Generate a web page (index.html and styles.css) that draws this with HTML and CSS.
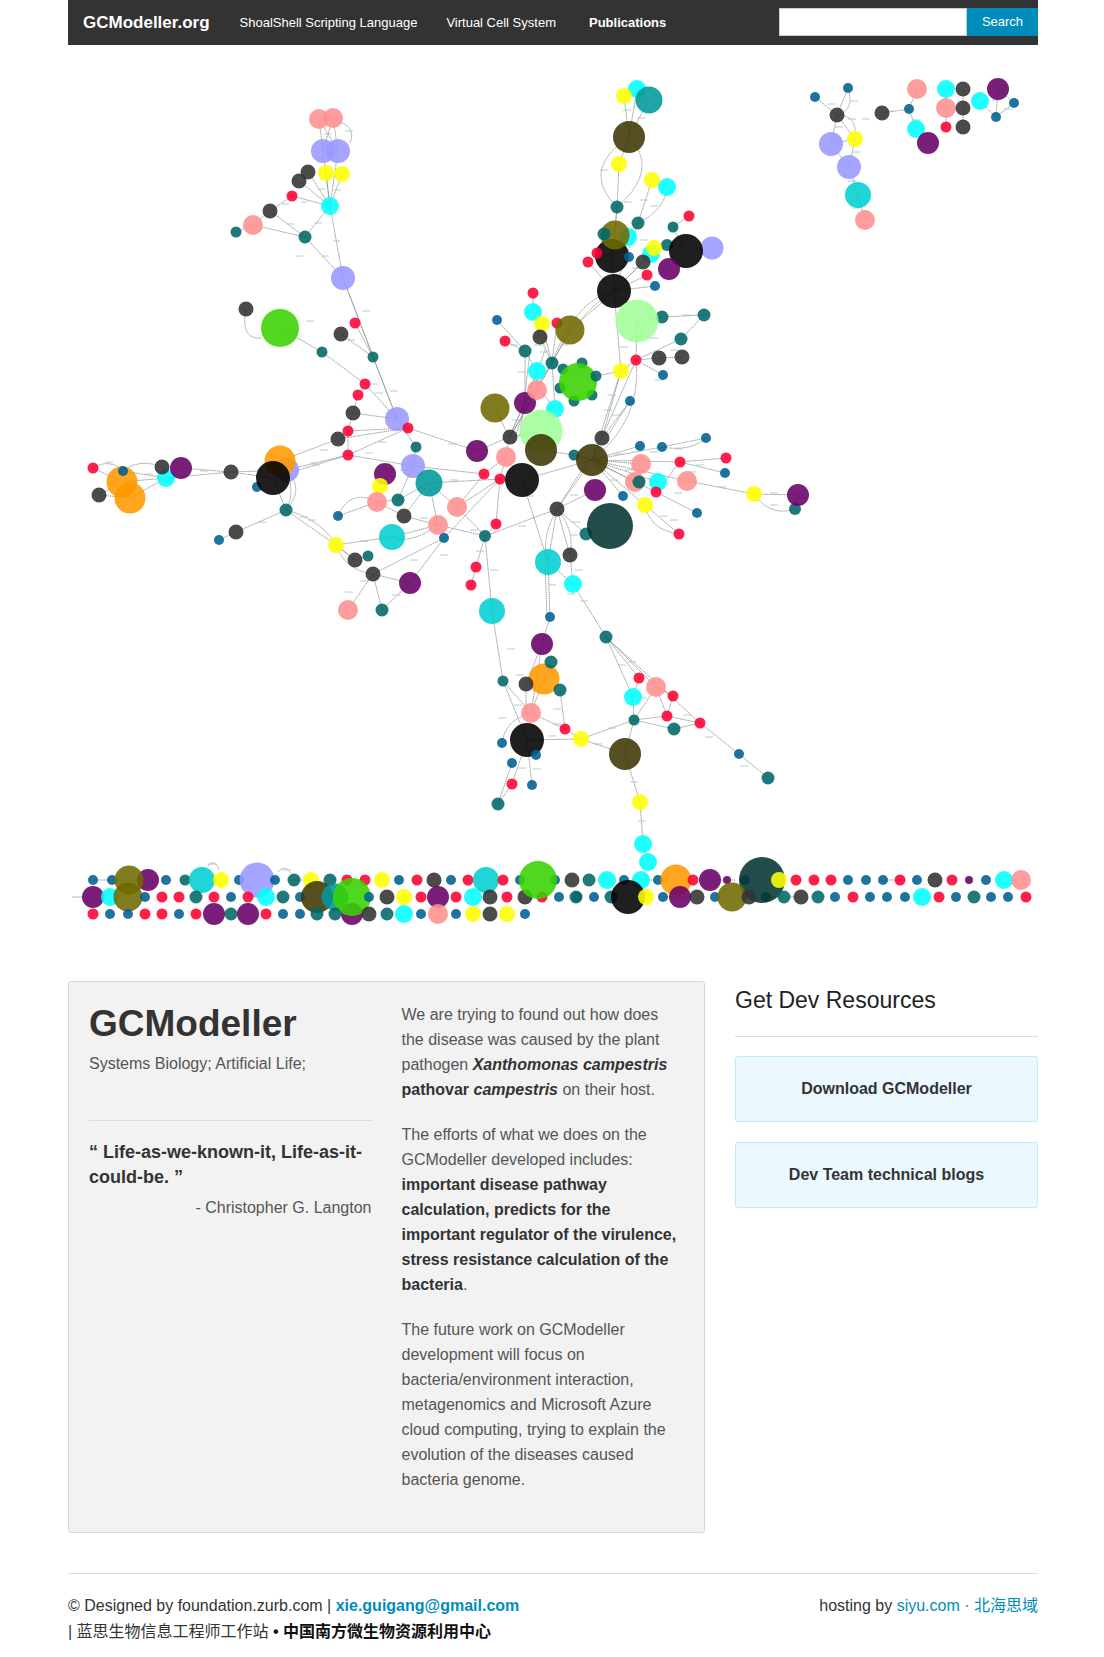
FILE: index.html
```
<!DOCTYPE html>
<html lang="en">
<head>
  <meta charset="UTF-8" />
  <title>GCModeller</title>
  <link rel="stylesheet" href="styles.css">
</head>
<body>
<div class="page">

  <!-- Top bar -->
  <nav class="topbar">
    <a class="logo" href="#">GCModeller.org</a>
    <a class="nav-link shoal" href="#">ShoalShell Scripting Language</a>
    <a class="nav-link cell" href="#">Virtual Cell System</a>
    <a class="nav-link pubs" href="#">Publications</a>
    <form class="search">
      <input type="text" />
      <button type="button">Search</button>
    </form>
  </nav>

  <!-- Network graph, coordinates are page pixels -->
  <svg class="graph" viewBox="68 45 970 900" width="970" height="900">
    <path class="edges" d="M319 119L323 151M333 118L338 151M319 119L338 151M333 118L323 151M340 122Q356 128 350 143M326 173L330 206M342 174L330 206M323 151L330 206M338 151L330 206M308 172L330 206M299 181L330 206M292 196L330 206M292 196L270 211M270 211L253 225M253 225L236 232M253 225L305 237M270 211L305 237M305 237L330 206M343 278L330 206M343 278L305 237M343 278L373 357M343 278L397 419
    M280 328L322 352M322 352L365 384M365 384L397 419M355 323L373 357M341 334L373 357M373 357L397 419M246 309Q240 340 262 338M358 395L353 413M353 413L397 419M353 413L348 431M348 431L408 428M348 431L348 455M338 439L408 428M348 455L408 428M408 428L477 451M397 419L416 447M416 447L413 466
    M93 468Q110 458 123 471M93 468L122 482M123 471L166 478M122 482L166 478M130 498L166 478M99 495L122 482M99 495L130 498M123 471Q140 458 162 467M162 467L166 478M181 468L231 472M166 478L231 472M231 472L273 478M231 472L287 470M280 461L338 439M287 470L348 455M273 478L348 455M287 470Q305 490 286 510M273 478L286 510M287 470Q295 495 286 510M286 510L236 532M236 532L219 540M286 510Q322 520 336 545M286 510L336 545M336 545L392 537M336 545L355 560M336 545Q345 570 373 574M348 610L373 574M373 574L382 610M373 574L410 583M410 583L382 610M410 583L444 538M373 574L444 538M355 560L368 556M355 560L336 545
    M348 455L413 466M413 466L484 474M429 483L500 479M429 483L457 507M429 483L438 525M398 500L429 483M398 500L413 466M404 516L429 483M404 516L438 525M377 502L398 500M377 502L404 516M338 516Q350 488 377 502M338 516L377 502M438 525Q410 545 392 537M392 537L438 525M438 525L485 536M457 507L485 536M457 507L500 479M457 507L484 474M444 538L500 479M485 536L496 524M496 524L500 479M485 536L557 509M485 536L476 567M476 567L471 585M485 536L492 611M522 480L548 562M522 480L592 460
    M477 451L509 437M509 437L525 403M509 437L506 457M506 457L500 479M484 474L506 457M495 408L509 437M497 320L525 351M505 341L525 351M533 292L533 312M533 312L540 337M542 324L552 363M540 337L552 363M557 323L552 363M570 330L552 363M570 330L614 292M552 363Q580 310 614 292M525 351L537 371M525 351L525 403M537 371L537 390M552 363L537 390M552 363L525 403M552 363L510 437M537 390L510 437M537 371L510 437M541 431L510 437M555 409L540 390M552 363L555 409M530 351L520 437M545 350L515 437
    M596 376L621 371M621 371L636 360M637 321L636 360M614 291L621 371M621 371L602 438M621 371L592 460M636 360L592 460M630 401L602 438M630 401L592 460M636 360Q642 420 592 460M636 360L659 358M636 360L681 339M659 358L682 357M636 360L663 375M662 317L704 315M704 315L681 339M637 321L662 317
    M592 460L640 446M592 460L662 447M662 447L706 438M662 447Q690 452 706 438M592 460L641 464M592 460L680 462M592 460L635 482M592 460L658 482M592 460L656 492M592 460L645 505M592 460L623 496M592 460L687 481M680 462L726 458M680 462L725 473M656 492L680 462M656 492L697 513M645 505L679 534M645 505Q650 530 679 534M687 481L754 494M754 494L798 495M754 494Q770 517 795 509M798 495L795 509M592 460L557 509M602 438L557 509M595 490L557 509M557 509Q540 540 548 562M548 562L557 509M570 555L557 509M570 555Q575 530 557 509M586 534L557 509M570 555L573 584M548 562L573 584M573 584L606 637M548 562L550 617M545 562L547 617M550 617L542 644M541 450L574 455M574 455L592 460
    M492 611L503 681M542 644L531 713M551 662L544 679M542 644L526 684M544 679L531 713M526 684L526 713M560 690L565 729M503 681L531 713M503 681L527 740M531 713Q505 720 502 743M565 729L531 713M581 739L527 740M581 739L634 720M625 754L581 739M625 754L634 720M565 729L581 739M498 804L512 763M498 804L512 784M512 784L527 740M532 785L527 740M606 637L633 697M606 637L639 678M606 637L656 687M606 637L700 723M633 697L634 720M639 678L633 697M656 687L673 696M656 687L634 720M656 687L667 716M673 696L667 716M634 720L667 716M634 720L674 729M667 716L700 723M674 729L700 723M700 723L739 754M739 754L768 778M625 754L640 802M640 802L643 844M643 844L648 862
    M624 96L629 137M637 89L629 137M649 100L629 137M629 137L619 164M619 164L617 207M629 137Q580 170 617 207M629 137Q660 170 617 207M652 180L638 223M667 187Q665 210 638 223M617 207L615 235M604 234L615 235M689 216L673 227M673 227L686 251M612 256L614 291M647 275L614 291M655 286L614 291M643 262L614 291M588 262L614 291M597 253L612 256M651 254L614 291M638 223L614 291M638 223L612 256M617 207L612 256M614 291Q575 300 552 363M637 321L614 291
    M815 97L837 115M848 88L837 115M848 88Q855 110 837 115M837 115L831 144M837 115L855 139M837 115Q858 115 855 139M831 144L855 139M855 139L849 167M831 144L849 167M849 167L858 195M858 195L865 220M882 113L909 109M909 109L917 89M909 109L916 129M946 89L946 108M946 108L946 127M963 89L963 108M963 108L963 127M980 101L996 117M998 89L1014 103M998 89L996 117M1014 103L996 117
    M72 897H92M93 880H130M290 880H310M640 880H670M660 897H690M715 880H735M770 897H800M880 880H905M1000 880H1020M208 866Q215 858 219 870M278 872Q285 864 291 873" />
    <path class="edge-labels" d="M324 134h8M345 131h8M318 189h7M334 190h7M301 202h7M282 204h7M287 224h7M314 223h8M322 256h7M296 256h7M333 241h7M306 321h8M347 340h8M362 311h8M370 384h8M375 393h8M390 391h8M105 462h8M120 472h8M145 474h8M200 471h8M320 450h8M312 465h8M310 463h8M365 453h8M378 442h8M448 444h8M300 517h8M308 520h8M258 522h8M360 541h8M410 560h8M360 581h8M392 595h8M345 592h8M440 555h8M452 510h8M400 470h8M450 480h8M470 530h8M420 518h8M518 526h8M525 496h8M476 551h8M490 570h8M510 345h8M534 345h8M560 345h8M550 361h8M540 352h8M518 372h8M512 420h8M520 410h8M608 395h8M612 415h8M604 410h8M620 347h8M650 338h8M670 350h8M655 380h8M682 315h8M675 449h8M650 452h8M615 454h8M625 470h8M610 480h8M688 472h8M696 465h8M674 493h8M670 520h8M660 516h8M718 487h8M770 493h8M770 505h8M570 495h8M550 560h8M548 585h8M572 522h8M570 535h8M575 570h8M567 594h8M580 601h8M507 649h8M516 675h8M514 705h8M498 718h8M528 717h8M553 709h8M553 724h8M548 736h8M608 728h8M594 744h8M518 768h8M533 769h8M628 662h8M618 665h8M639 698h8M683 715h8M705 737h8M740 766h8M630 782h8M638 821h8M623 110h8M638 118h8M613 169h8M600 170h8M640 200h8M650 206h8M624 202h8M640 240h8M610 272h8M632 268h8M827 104h8M850 101h8M835 127h8M848 119h8M862 119h8M852 152h8M840 160h8M848 181h8M852 208h8M886 111h8M912 120h8M992 100h8M1004 109h8M130 880h8M208 864h9M282 870h9" />

    <!-- top left cluster -->
    <circle class="red" cx="533" cy="293" r="5.5"/>
    <circle class="pink" cx="319" cy="119" r="10"/>
    <circle class="pink" cx="333" cy="118" r="10"/>
    <circle class="lav" cx="323" cy="151" r="12"/>
    <circle class="lav" cx="338" cy="151" r="12"/>
    <circle class="dark" cx="308" cy="172" r="7.5"/>
    <circle class="dark" cx="299" cy="181" r="7.5"/>
    <circle class="yellow" cx="326" cy="173" r="8"/>
    <circle class="yellow" cx="342" cy="174" r="8"/>
    <circle class="red" cx="292" cy="196" r="5.5"/>
    <circle class="cyan" cx="330" cy="206" r="9"/>
    <circle class="dark" cx="270" cy="211" r="7.5"/>
    <circle class="pink" cx="253" cy="225" r="10"/>
    <circle class="teal" cx="236" cy="232" r="5.5"/>
    <circle class="teal" cx="305" cy="237" r="6.5"/>
    <circle class="lav" cx="343" cy="278" r="12"/>

    <!-- top centre cluster -->
    <circle class="cyan" cx="637" cy="89" r="9"/>
    <circle class="yellow" cx="624" cy="96" r="8"/>
    <circle class="aqua" cx="649" cy="100" r="13.5"/>
    <circle class="mud" cx="629" cy="137" r="16"/>
    <circle class="yellow" cx="619" cy="164" r="8"/>
    <circle class="yellow" cx="652" cy="180" r="8"/>
    <circle class="cyan" cx="667" cy="187" r="9"/>
    <circle class="teal" cx="617" cy="207" r="6.5"/>
    <circle class="teal" cx="638" cy="223" r="6.5"/>
    <circle class="red" cx="689" cy="216" r="5.5"/>
    <circle class="teal" cx="673" cy="227" r="5.5"/>
    <circle class="cyan" cx="628" cy="237" r="9"/>
    <circle class="black" cx="612" cy="256" r="17"/>
    <circle class="olive" cx="615" cy="235" r="14.5"/>
    <circle class="teal" cx="604" cy="234" r="6.5"/>
    <circle class="teal" cx="667" cy="245" r="6"/>
    <circle class="lav" cx="712" cy="248" r="11.5"/>
    <circle class="black" cx="686" cy="251" r="17"/>
    <circle class="cyan" cx="651" cy="254" r="9"/>
    <circle class="yellow" cx="654" cy="248" r="8"/>
    <circle class="red" cx="597" cy="253" r="5.5"/>
    <circle class="red" cx="588" cy="262" r="5.5"/>
    <circle class="blue" cx="629" cy="257" r="5"/>
    <circle class="dark" cx="643" cy="262" r="7.5"/>
    <circle class="purple" cx="669" cy="269" r="11"/>
    <circle class="red" cx="647" cy="275" r="5.5"/>
    <circle class="blue" cx="655" cy="286" r="5"/>
    <circle class="black" cx="614" cy="291" r="17"/>

    <!-- top right clusters -->
    <circle class="blue" cx="815" cy="97" r="5"/>
    <circle class="blue" cx="848" cy="88" r="5"/>
    <circle class="dark" cx="837" cy="115" r="7.5"/>
    <circle class="lav" cx="831" cy="144" r="12"/>
    <circle class="yellow" cx="855" cy="139" r="8"/>
    <circle class="lav" cx="849" cy="167" r="12"/>
    <circle class="turq" cx="858" cy="195" r="13"/>
    <circle class="pink" cx="865" cy="220" r="10"/>
    <circle class="pink" cx="917" cy="89" r="10"/>
    <circle class="dark" cx="882" cy="113" r="7.5"/>
    <circle class="blue" cx="909" cy="109" r="5"/>
    <circle class="cyan" cx="916" cy="129" r="9"/>
    <circle class="purple" cx="928" cy="143" r="11"/>
    <circle class="cyan" cx="946" cy="89" r="9"/>
    <circle class="pink" cx="946" cy="108" r="10"/>
    <circle class="red" cx="946" cy="127" r="5.5"/>
    <circle class="dark" cx="963" cy="89" r="7.5"/>
    <circle class="dark" cx="963" cy="108" r="7.5"/>
    <circle class="dark" cx="963" cy="127" r="7.5"/>
    <circle class="cyan" cx="980" cy="101" r="9"/>
    <circle class="purple" cx="998" cy="89" r="11"/>
    <circle class="blue" cx="1014" cy="103" r="5"/>
    <circle class="blue" cx="996" cy="117" r="5"/>

    <!-- left and middle -->
    <circle class="dark" cx="246" cy="309" r="7.5"/>
    <circle class="green" cx="280" cy="328" r="19"/>
    <circle class="red" cx="355" cy="323" r="5.5"/>
    <circle class="dark" cx="341" cy="334" r="7.5"/>
    <circle class="teal" cx="322" cy="352" r="5.5"/>
    <circle class="teal" cx="373" cy="357" r="5.5"/>
    <circle class="red" cx="365" cy="384" r="5.5"/>
    <circle class="red" cx="358" cy="395" r="5.5"/>
    <circle class="dark" cx="353" cy="413" r="7.5"/>
    <circle class="lav" cx="397" cy="419" r="12"/>
    <circle class="red" cx="408" cy="428" r="5.5"/>
    <circle class="red" cx="348" cy="431" r="5.5"/>
    <circle class="dark" cx="338" cy="439" r="7.5"/>
    <circle class="red" cx="348" cy="455" r="5.5"/>
    <circle class="teal" cx="416" cy="447" r="5.5"/>
    <circle class="purple" cx="385" cy="474" r="11"/>
    <circle class="lav" cx="413" cy="466" r="12"/>
    <circle class="yellow" cx="380" cy="486" r="8"/>
    <circle class="aqua" cx="429" cy="483" r="13.5"/>
    <circle class="pink" cx="377" cy="502" r="10"/>
    <circle class="teal" cx="398" cy="500" r="6.5"/>
    <circle class="dark" cx="404" cy="516" r="7.5"/>
    <circle class="pink" cx="457" cy="507" r="10"/>
    <circle class="pink" cx="438" cy="525" r="10"/>
    <circle class="blue" cx="444" cy="538" r="5"/>
    <circle class="blue" cx="338" cy="516" r="5"/>
    <circle class="turq" cx="392" cy="537" r="13"/>
    <circle class="yellow" cx="336" cy="545" r="8"/>
    <circle class="dark" cx="355" cy="560" r="7.5"/>
    <circle class="teal" cx="368" cy="556" r="5.5"/>
    <circle class="dark" cx="373" cy="574" r="7.5"/>
    <circle class="purple" cx="410" cy="583" r="11"/>
    <circle class="pink" cx="348" cy="610" r="10"/>
    <circle class="teal" cx="382" cy="610" r="6.5"/>
    <circle class="red" cx="93" cy="468" r="5.5"/>
    <circle class="orange" cx="122" cy="482" r="15.5"/>
    <circle class="orange" cx="130" cy="498" r="15.5"/>
    <circle class="blue" cx="123" cy="471" r="5"/>
    <circle class="dark" cx="99" cy="495" r="7.5"/>
    <circle class="cyan" cx="166" cy="478" r="9"/>
    <circle class="dark" cx="162" cy="467" r="7.5"/>
    <circle class="purple" cx="181" cy="468" r="11"/>
    <circle class="dark" cx="231" cy="472" r="7.5"/>
    <circle class="lav" cx="287" cy="470" r="12"/>
    <circle class="orange" cx="280" cy="461" r="15.5"/>
    <circle class="blue" cx="257" cy="487" r="5"/>
    <circle class="black" cx="273" cy="478" r="17"/>
    <circle class="teal" cx="286" cy="510" r="6.5"/>
    <circle class="dark" cx="236" cy="532" r="7.5"/>
    <circle class="blue" cx="219" cy="540" r="5"/>

    <!-- centre -->
    <circle class="teal" cx="563" cy="369" r="5.5"/>
    <circle class="teal" cx="582" cy="363" r="5.5"/>
    <circle class="teal" cx="560" cy="388" r="5.5"/>
    <circle class="teal" cx="592" cy="395" r="5.5"/>
    <circle class="teal" cx="574" cy="401" r="5.5"/>
    <circle class="green" cx="578" cy="382" r="19"/>
    <circle class="teal" cx="596" cy="376" r="5.5"/>
    <circle class="cyan" cx="533" cy="312" r="9"/>
    <circle class="blue" cx="497" cy="320" r="5"/>
    <circle class="red" cx="557" cy="323" r="5.5"/>
    <circle class="yellow" cx="542" cy="324" r="8"/>
    <circle class="olive" cx="570" cy="330" r="14.5"/>
    <circle class="dark" cx="540" cy="337" r="7.5"/>
    <circle class="red" cx="505" cy="341" r="5.5"/>
    <circle class="teal" cx="525" cy="351" r="6.5"/>
    <circle class="teal" cx="552" cy="363" r="6.5"/>
    <circle class="cyan" cx="537" cy="371" r="9"/>
    <circle class="purple" cx="525" cy="403" r="11"/>
    <circle class="pink" cx="537" cy="390" r="10"/>
    <circle class="olive" cx="495" cy="408" r="14.5"/>
    <circle class="cyan" cx="555" cy="409" r="9"/>
    <circle class="mint" cx="541" cy="431" r="21.5"/>
    <circle class="mud" cx="541" cy="450" r="16"/>
    <circle class="dark" cx="510" cy="437" r="7.5"/>
    <circle class="purple" cx="477" cy="451" r="11"/>
    <circle class="pink" cx="506" cy="457" r="10"/>
    <circle class="red" cx="484" cy="474" r="5.5"/>
    <circle class="red" cx="500" cy="479" r="5.5"/>
    <circle class="black" cx="522" cy="480" r="17"/>
    <circle class="red" cx="496" cy="524" r="5.5"/>
    <circle class="teal" cx="485" cy="536" r="6"/>
    <circle class="red" cx="476" cy="567" r="5.5"/>
    <circle class="red" cx="471" cy="585" r="5.5"/>
    <circle class="turq" cx="492" cy="611" r="13"/>
    <circle class="yellow" cx="621" cy="371" r="8"/>
    <circle class="blue" cx="630" cy="401" r="5"/>
    <circle class="teal" cx="662" cy="317" r="6.5"/>
    <circle class="mint" cx="637" cy="321" r="21.5"/>
    <circle class="teal" cx="704" cy="315" r="6.5"/>
    <circle class="teal" cx="681" cy="339" r="6.5"/>
    <circle class="red" cx="636" cy="360" r="5.5"/>
    <circle class="dark" cx="659" cy="358" r="7.5"/>
    <circle class="dark" cx="682" cy="357" r="7.5"/>
    <circle class="blue" cx="663" cy="375" r="5"/>
    <circle class="dark" cx="602" cy="438" r="7.5"/>
    <circle class="teal" cx="574" cy="455" r="5.5"/>
    <circle class="mud" cx="592" cy="460" r="16"/>
    <circle class="pink" cx="641" cy="464" r="10"/>
    <circle class="pink" cx="635" cy="482" r="10"/>
    <circle class="teal" cx="639" cy="482" r="6.5"/>
    <circle class="cyan" cx="658" cy="482" r="9"/>
    <circle class="red" cx="656" cy="492" r="5.5"/>
    <circle class="red" cx="680" cy="462" r="5.5"/>
    <circle class="pink" cx="687" cy="481" r="10"/>
    <circle class="blue" cx="640" cy="446" r="5"/>
    <circle class="blue" cx="662" cy="447" r="5"/>
    <circle class="blue" cx="706" cy="438" r="5"/>
    <circle class="red" cx="726" cy="458" r="5.5"/>
    <circle class="blue" cx="725" cy="473" r="5"/>
    <circle class="yellow" cx="754" cy="494" r="8"/>
    <circle class="teal" cx="795" cy="509" r="6"/>
    <circle class="purple" cx="798" cy="495" r="11"/>
    <circle class="purple" cx="595" cy="490" r="11"/>
    <circle class="yellow" cx="645" cy="505" r="8"/>
    <circle class="blue" cx="623" cy="496" r="5"/>
    <circle class="blue" cx="697" cy="513" r="5"/>
    <circle class="red" cx="679" cy="534" r="5.5"/>
    <circle class="dark" cx="557" cy="509" r="7.5"/>
    <circle class="teal" cx="586" cy="534" r="6.5"/>
    <circle class="slate" cx="610" cy="526" r="23"/>
    <circle class="dark" cx="570" cy="555" r="7.5"/>
    <circle class="turq" cx="548" cy="562" r="13"/>
    <circle class="cyan" cx="573" cy="584" r="9"/>

    <!-- lower clusters -->
    <circle class="blue" cx="550" cy="617" r="5"/>
    <circle class="purple" cx="542" cy="644" r="11"/>
    <circle class="orange" cx="544" cy="679" r="15.5"/>
    <circle class="teal" cx="551" cy="662" r="6.5"/>
    <circle class="dark" cx="526" cy="684" r="7.5"/>
    <circle class="teal" cx="560" cy="690" r="6.5"/>
    <circle class="teal" cx="503" cy="681" r="5.5"/>
    <circle class="pink" cx="531" cy="713" r="10"/>
    <circle class="black" cx="527" cy="740" r="17"/>
    <circle class="red" cx="565" cy="729" r="5.5"/>
    <circle class="yellow" cx="581" cy="739" r="8"/>
    <circle class="blue" cx="502" cy="743" r="5"/>
    <circle class="blue" cx="536" cy="755" r="5"/>
    <circle class="blue" cx="512" cy="763" r="5"/>
    <circle class="red" cx="512" cy="784" r="5.5"/>
    <circle class="blue" cx="532" cy="785" r="5"/>
    <circle class="teal" cx="498" cy="804" r="6.5"/>
    <circle class="teal" cx="606" cy="637" r="6.5"/>
    <circle class="red" cx="639" cy="678" r="5.5"/>
    <circle class="pink" cx="656" cy="687" r="10"/>
    <circle class="cyan" cx="633" cy="697" r="9"/>
    <circle class="red" cx="673" cy="696" r="5.5"/>
    <circle class="teal" cx="634" cy="720" r="5.5"/>
    <circle class="red" cx="667" cy="716" r="5.5"/>
    <circle class="teal" cx="674" cy="729" r="6.5"/>
    <circle class="red" cx="700" cy="723" r="5.5"/>
    <circle class="mud" cx="625" cy="754" r="16"/>
    <circle class="blue" cx="739" cy="754" r="5"/>
    <circle class="teal" cx="768" cy="778" r="6.5"/>
    <circle class="yellow" cx="640" cy="802" r="8"/>
    <circle class="cyan" cx="643" cy="844" r="9"/>
    <circle class="cyan" cx="648" cy="862" r="9"/>

    <!-- bottom rows, row 1 -->
    <circle class="blue" cx="93" cy="880" r="5"/>
    <circle class="blue" cx="112" cy="880" r="5"/>
    <circle class="purple" cx="148" cy="880" r="11"/>
    <circle class="olive" cx="129" cy="880" r="14.5"/>
    <circle class="blue" cx="166" cy="880" r="5"/>
    <circle class="teal" cx="185" cy="880" r="5.5"/>
    <circle class="turq" cx="202" cy="880" r="13"/>
    <circle class="yellow" cx="221" cy="880" r="8"/>
    <circle class="blue" cx="239" cy="880" r="5"/>
    <circle class="lav" cx="257" cy="880" r="17.5"/>
    <circle class="blue" cx="275" cy="880" r="5"/>
    <circle class="teal" cx="294" cy="880" r="6.5"/>
    <circle class="yellow" cx="311" cy="880" r="8"/>
    <circle class="teal" cx="330" cy="880" r="6.5"/>
    <circle class="red" cx="347" cy="880" r="5.5"/>
    <circle class="red" cx="365" cy="880" r="5.5"/>
    <circle class="yellow" cx="382" cy="880" r="8"/>
    <circle class="blue" cx="399" cy="880" r="5"/>
    <circle class="red" cx="417" cy="880" r="5.5"/>
    <circle class="dark" cx="434" cy="880" r="7.5"/>
    <circle class="blue" cx="451" cy="880" r="5"/>
    <circle class="red" cx="468" cy="880" r="5.5"/>
    <circle class="turq" cx="486" cy="880" r="13"/>
    <circle class="red" cx="503" cy="880" r="5.5"/>
    <circle class="blue" cx="520" cy="880" r="5"/>
    <circle class="blue" cx="555" cy="880" r="5"/>
    <circle class="dark" cx="572" cy="880" r="7.5"/>
    <circle class="teal" cx="589" cy="880" r="6.5"/>
    <circle class="cyan" cx="607" cy="880" r="9"/>
    <circle class="blue" cx="624" cy="880" r="5"/>
    <circle class="cyan" cx="641" cy="880" r="9"/>
    <circle class="blue" cx="658" cy="880" r="5"/>
    <circle class="orange" cx="676" cy="880" r="15.5"/>
    <circle class="red" cx="693" cy="880" r="5.5"/>
    <circle class="purple" cx="710" cy="880" r="11"/>
    <circle class="purple" cx="727" cy="880" r="4"/>
    <circle class="blue" cx="745" cy="880" r="5"/>
    <circle class="blue" cx="766" cy="897" r="5"/>
    <circle class="slate" cx="762" cy="880" r="23"/>
    <circle class="yellow" cx="779" cy="880" r="8"/>
    <circle class="red" cx="796" cy="880" r="5.5"/>
    <circle class="red" cx="814" cy="880" r="5.5"/>
    <circle class="red" cx="831" cy="880" r="5.5"/>
    <circle class="blue" cx="848" cy="880" r="5"/>
    <circle class="blue" cx="866" cy="880" r="5"/>
    <circle class="blue" cx="883" cy="880" r="5"/>
    <circle class="red" cx="900" cy="880" r="5.5"/>
    <circle class="blue" cx="917" cy="880" r="5"/>
    <circle class="dark" cx="935" cy="880" r="7.5"/>
    <circle class="red" cx="952" cy="880" r="5.5"/>
    <circle class="purple" cx="969" cy="880" r="4"/>
    <circle class="blue" cx="986" cy="880" r="5"/>
    <circle class="cyan" cx="1004" cy="880" r="9"/>
    <circle class="pink" cx="1021" cy="880" r="10"/>

    <!-- row 2 -->
    <circle class="purple" cx="93" cy="897" r="11"/>
    <circle class="cyan" cx="110" cy="897" r="9"/>
    <circle class="olive" cx="128" cy="897" r="14.5"/>
    <circle class="blue" cx="145" cy="897" r="5"/>
    <circle class="red" cx="162" cy="897" r="5.5"/>
    <circle class="red" cx="179" cy="897" r="5.5"/>
    <circle class="teal" cx="196" cy="897" r="6.5"/>
    <circle class="red" cx="214" cy="897" r="5.5"/>
    <circle class="blue" cx="231" cy="897" r="5"/>
    <circle class="red" cx="248" cy="897" r="5.5"/>
    <circle class="cyan" cx="266" cy="897" r="9"/>
    <circle class="teal" cx="283" cy="897" r="6.5"/>
    <circle class="blue" cx="300" cy="897" r="5"/>
    <circle class="mud" cx="317" cy="897" r="16"/>
    <circle class="purple" cx="352" cy="914" r="11"/>
    <circle class="aqua" cx="335" cy="897" r="13.5"/>
    <circle class="green" cx="352" cy="897" r="19"/>
    <circle class="blue" cx="369" cy="897" r="5"/>
    <circle class="dark" cx="387" cy="897" r="7.5"/>
    <circle class="yellow" cx="404" cy="897" r="8"/>
    <circle class="red" cx="421" cy="897" r="5.5"/>
    <circle class="purple" cx="438" cy="897" r="11"/>
    <circle class="red" cx="456" cy="897" r="5.5"/>
    <circle class="cyan" cx="473" cy="897" r="9"/>
    <circle class="dark" cx="490" cy="897" r="7.5"/>
    <circle class="red" cx="507" cy="897" r="5.5"/>
    <circle class="dark" cx="525" cy="897" r="7.5"/>
    <circle class="red" cx="542" cy="897" r="5.5"/>
    <circle class="blue" cx="559" cy="897" r="5"/>
    <circle class="green" cx="538" cy="880" r="19"/>
    <circle class="blue" cx="577" cy="897" r="5"/>
    <circle class="teal" cx="576" cy="897" r="6.5"/>
    <circle class="blue" cx="594" cy="897" r="5"/>
    <circle class="teal" cx="611" cy="897" r="6.5"/>
    <circle class="black" cx="628" cy="897" r="17"/>
    <circle class="yellow" cx="646" cy="897" r="8"/>
    <circle class="blue" cx="663" cy="897" r="5"/>
    <circle class="purple" cx="680" cy="897" r="11"/>
    <circle class="dark" cx="697" cy="897" r="7.5"/>
    <circle class="blue" cx="715" cy="897" r="5"/>
    <circle class="olive" cx="732" cy="897" r="14.5"/>
    <circle class="dark" cx="749" cy="897" r="7.5"/>
    <circle class="teal" cx="784" cy="897" r="6.5"/>
    <circle class="dark" cx="801" cy="897" r="7.5"/>
    <circle class="teal" cx="818" cy="897" r="6.5"/>
    <circle class="blue" cx="835" cy="897" r="5"/>
    <circle class="red" cx="853" cy="897" r="5.5"/>
    <circle class="blue" cx="870" cy="897" r="5"/>
    <circle class="blue" cx="887" cy="897" r="5"/>
    <circle class="blue" cx="905" cy="897" r="5"/>
    <circle class="cyan" cx="922" cy="897" r="9"/>
    <circle class="red" cx="939" cy="897" r="5.5"/>
    <circle class="blue" cx="956" cy="897" r="5"/>
    <circle class="teal" cx="974" cy="897" r="6.5"/>
    <circle class="blue" cx="991" cy="897" r="5"/>
    <circle class="blue" cx="1008" cy="897" r="5"/>
    <circle class="red" cx="1026" cy="897" r="5.5"/>

    <!-- row 3 -->
    <circle class="red" cx="93" cy="914" r="5.5"/>
    <circle class="blue" cx="110" cy="914" r="5"/>
    <circle class="blue" cx="128" cy="914" r="5"/>
    <circle class="red" cx="145" cy="914" r="5.5"/>
    <circle class="red" cx="162" cy="914" r="5.5"/>
    <circle class="blue" cx="179" cy="914" r="5"/>
    <circle class="red" cx="196" cy="914" r="5.5"/>
    <circle class="purple" cx="214" cy="914" r="11"/>
    <circle class="teal" cx="231" cy="914" r="6.5"/>
    <circle class="purple" cx="248" cy="914" r="11"/>
    <circle class="red" cx="266" cy="914" r="5.5"/>
    <circle class="blue" cx="283" cy="914" r="5"/>
    <circle class="blue" cx="300" cy="914" r="5"/>
    <circle class="teal" cx="317" cy="914" r="6.5"/>
    <circle class="teal" cx="335" cy="914" r="6.5"/>
    <circle class="dark" cx="369" cy="914" r="7.5"/>
    <circle class="teal" cx="387" cy="914" r="6.5"/>
    <circle class="cyan" cx="404" cy="914" r="9"/>
    <circle class="blue" cx="421" cy="914" r="5"/>
    <circle class="pink" cx="438" cy="914" r="10"/>
    <circle class="blue" cx="456" cy="914" r="5"/>
    <circle class="yellow" cx="473" cy="914" r="8"/>
    <circle class="dark" cx="490" cy="914" r="7.5"/>
    <circle class="yellow" cx="507" cy="914" r="8"/>
    <circle class="blue" cx="525" cy="914" r="5"/>
  </svg>

  <div class="content">
    <section class="panel">
      <div class="panel-col">
        <h1>GCModeller</h1>
        <p class="tagline">Systems Biology; Artificial Life;</p>
        <hr class="panel-rule" />
        <p class="quote">“ Life-as-we-known-it, Life-as-it-could-be. ”</p>
        <p class="cite">- Christopher G. Langton</p>
      </div>
      <div class="panel-col">
        <p>We are trying to found out how does the disease was caused by the plant pathogen <strong><em>Xanthomonas campestris</em> pathovar <em>campestris</em></strong> on their host.</p>
        <p>The efforts of what we does on the GCModeller developed includes: <strong>important disease pathway calculation, predicts for the important regulator of the virulence, stress resistance calculation of the bacteria</strong>.</p>
        <p>The future work on GCModeller development will focus on bacteria/environment interaction, metagenomics and Microsoft Azure cloud computing, trying to explain the evolution of the diseases caused bacteria genome.</p>
      </div>
    </section>

    <aside class="side">
      <h3>Get Dev Resources</h3>
      <hr class="side-rule" />
      <a class="res-box" href="#">Download GCModeller</a>
      <a class="res-box" href="#">Dev Team technical blogs</a>
    </aside>
  </div>

  <footer class="footer">
    <div class="foot-left">
      <div>© Designed by foundation.zurb.com | <a class="mail" href="#">xie.guigang@gmail.com</a></div>
      <div>| 蓝思生物信息工程师工作站 <strong>• 中国南方微生物资源利用中心</strong></div>
    </div>
    <div class="foot-right">hosting by <a href="#">siyu.com · 北海思域</a></div>
  </footer>
</div>
</body>
</html>
```

FILE: styles.css
```
* { box-sizing: border-box; }
body {
  margin: 0;
  background: #fff;
  color: #333;
  font-family: "Liberation Sans", "Noto Sans CJK SC", sans-serif;
  font-size: 16px;
}
a { color: #008cba; text-decoration: none; }
hr {
  border: none;
  border-top: 1px solid #ddd;
  margin: 0;
}
.page {
  width: 970px;
  margin-left: 68px;
}

/* top bar */
.topbar {
  display: flex;
  align-items: center;
  height: 45px;
  background: #333;
  color: #fff;
}
.logo {
  color: #fff;
  font-size: 17px;
  font-weight: bold;
  margin-left: 15px;
}
.nav-link {
  color: #fff;
  font-size: 13px;
}
.shoal { margin-left: 30px; }
.cell { margin-left: 29px; }
.pubs { margin-left: 33px; font-weight: bold; }
.search {
  display: flex;
  margin-left: auto;
  height: 28px;
  margin-top: -2px;
}
.search input {
  width: 188px;
  height: 28px;
  border: 1px solid #ccc;
  background: #fff;
  padding: 0;
}
.search button {
  width: 71px;
  height: 28px;
  border: none;
  background: #008cba;
  color: #fff;
  font-family: inherit;
  font-size: 13px;
  padding: 0;
}

/* graph */
.graph {
  display: block;
  margin-bottom: 36px;
}
.graph circle { fill-opacity: 0.88; }
.edges {
  fill: none;
  stroke: #778180;
  stroke-width: 0.7;
  stroke-dasharray: 1.6 0.5;
}
.edge-labels {
  fill: none;
  stroke: #9cc4c1;
  stroke-width: 0.8;
}
.red { fill: #ff0032; }
.blue { fill: #006092; }
.teal { fill: #006866; }
.dark { fill: #323232; }
.pink { fill: #ff9090; }
.lav { fill: #9898ff; }
.cyan { fill: #00ffff; }
.yellow { fill: #ffff00; }
.purple { fill: #680066; }
.turq { fill: #00cfcf; }
.aqua { fill: #009898; }
.olive { fill: #6f6a00; }
.mud { fill: #3d3702; }
.black { fill: #000; }
.green { fill: #38d302; }
.mint { fill: #a0ff97; }
.orange { fill: #ff9900; }
.slate { fill: #053431; }

/* main content */
.content {
  display: flex;
  align-items: flex-start;
  gap: 30px;
}
.panel {
  display: flex;
  width: 637px;
  height: 552px;
  padding: 20px 5px;
  background: #f2f2f2;
  border: 1px solid #d8d8d8;
  border-radius: 3px;
}
.panel-col {
  flex: 1;
  padding: 0 15px;
  color: #555;
  line-height: 25px;
}
.panel-col p { margin: 0 0 20px; }
.panel-col strong { color: #333; }
h1 {
  margin: 0;
  color: #333;
  font-size: 37px;
  line-height: 44px;
}
.panel-col .tagline { margin: 5px 0 44px; }
.panel-rule { margin-bottom: 19px; }
.panel-col .quote {
  margin: 0 0 5px;
  color: #333;
  font-size: 18px;
  font-weight: bold;
}
.panel-col .cite { text-align: right; }

.side { width: 303px; }
h3 {
  margin: 0;
  color: #222;
  font-size: 23px;
  font-weight: normal;
  line-height: 38px;
}
.side-rule { margin: 17px 0 19px; }
.res-box {
  display: flex;
  align-items: center;
  justify-content: center;
  height: 66px;
  margin-bottom: 20px;
  background: #ebf8fe;
  border: 1px solid #b9ecfb;
  border-radius: 3px;
  color: #333;
  font-weight: bold;
}

/* footer */
.footer {
  display: flex;
  justify-content: space-between;
  margin-top: 40px;
  padding-top: 19px;
  border-top: 1px solid #ddd;
  line-height: 26px;
}
.foot-left strong { color: #111; }
.mail { font-weight: bold; }
```
